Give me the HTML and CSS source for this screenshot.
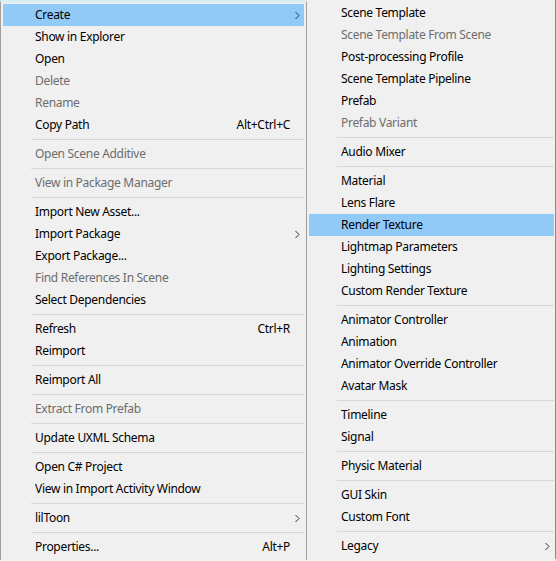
FILE: index.html
```html
<!DOCTYPE html>
<html lang="en">
<head>
    <meta charset="UTF-8">
    <title>Assets - Context Menu</title>
    <link rel="stylesheet" href="styles.css">
</head>
<body>
    <div class="menus">
        <div class="menu main">
            <div class="item active"><span>Create</span><span class="arrow"><svg width="5" height="9" viewBox="0 0 5 9"><polyline points="0.5,1 4,4.5 0.5,8"/></svg></span></div>
            <div class="item"><span>Show in Explorer</span></div>
            <div class="item"><span>Open</span></div>
            <div class="item disabled"><span>Delete</span></div>
            <div class="item disabled"><span>Rename</span></div>
            <div class="item"><span>Copy Path</span><span class="shortcut">Alt+Ctrl+C</span></div>
            <div class="sep"></div>
            <div class="item disabled"><span>Open Scene Additive</span></div>
            <div class="sep"></div>
            <div class="item disabled"><span>View in Package Manager</span></div>
            <div class="sep"></div>
            <div class="item"><span>Import New Asset...</span></div>
            <div class="item"><span>Import Package</span><span class="arrow"><svg width="5" height="9" viewBox="0 0 5 9"><polyline points="0.5,1 4,4.5 0.5,8"/></svg></span></div>
            <div class="item"><span>Export Package...</span></div>
            <div class="item disabled"><span>Find References In Scene</span></div>
            <div class="item"><span>Select Dependencies</span></div>
            <div class="sep"></div>
            <div class="item"><span>Refresh</span><span class="shortcut">Ctrl+R</span></div>
            <div class="item"><span>Reimport</span></div>
            <div class="sep"></div>
            <div class="item"><span>Reimport All</span></div>
            <div class="sep"></div>
            <div class="item disabled"><span>Extract From Prefab</span></div>
            <div class="sep"></div>
            <div class="item"><span>Update UXML Schema</span></div>
            <div class="sep"></div>
            <div class="item"><span>Open C# Project</span></div>
            <div class="item"><span>View in Import Activity Window</span></div>
            <div class="sep"></div>
            <div class="item"><span>lilToon</span><span class="arrow"><svg width="5" height="9" viewBox="0 0 5 9"><polyline points="0.5,1 4,4.5 0.5,8"/></svg></span></div>
            <div class="sep"></div>
            <div class="item"><span>Properties...</span><span class="shortcut">Alt+P</span></div>
        </div>

        <div class="menu sub">
            <div class="item"><span>Scene Template</span></div>
            <div class="item disabled"><span>Scene Template From Scene</span></div>
            <div class="item"><span>Post-processing Profile</span></div>
            <div class="item"><span>Scene Template Pipeline</span></div>
            <div class="item"><span>Prefab</span></div>
            <div class="item disabled"><span>Prefab Variant</span></div>
            <div class="sep"></div>
            <div class="item"><span>Audio Mixer</span></div>
            <div class="sep"></div>
            <div class="item"><span>Material</span></div>
            <div class="item"><span>Lens Flare</span></div>
            <div class="item active"><span>Render Texture</span></div>
            <div class="item"><span>Lightmap Parameters</span></div>
            <div class="item"><span>Lighting Settings</span></div>
            <div class="item"><span>Custom Render Texture</span></div>
            <div class="sep"></div>
            <div class="item"><span>Animator Controller</span></div>
            <div class="item"><span>Animation</span></div>
            <div class="item"><span>Animator Override Controller</span></div>
            <div class="item"><span>Avatar Mask</span></div>
            <div class="sep"></div>
            <div class="item"><span>Timeline</span></div>
            <div class="item"><span>Signal</span></div>
            <div class="sep"></div>
            <div class="item"><span>Physic Material</span></div>
            <div class="sep"></div>
            <div class="item"><span>GUI Skin</span></div>
            <div class="item"><span>Custom Font</span></div>
            <div class="sep"></div>
            <div class="item"><span>Legacy</span><span class="arrow"><svg width="5" height="9" viewBox="0 0 5 9"><polyline points="0.5,1 4,4.5 0.5,8"/></svg></span></div>
        </div>
    </div>
</body>
</html>
```

FILE: styles.css
```css
:root {
    --menu-bg: #f0f0f0;
    --hover: #91c9f7;
    --text: #000000;
    --text-disabled: #6d6d6d;
    --separator: #d7d7d7;
    --border: #a0a0a0;
}

* {
    box-sizing: border-box;
}

body {
    margin: 0;
    background: var(--menu-bg);
    font-family: "Segoe UI", "Noto Sans", sans-serif;
    font-size: 12px;
    letter-spacing: -0.3px;
    color: var(--text);
    overflow: hidden;
}

.menus {
    display: flex;
    align-items: flex-start;
}

.menu {
    background: var(--menu-bg);
    display: flex;
    flex-direction: column;
}

.menu.main {
    width: 307px;
    border-left: 1px solid var(--border);
    border-right: 1px solid var(--border);
    border-top: 3px solid #dcedf4;
    padding: 1px 2px 2px;
}

.menu.sub {
    width: 249px;
    border-right: 1px solid #8a8a8a;
    padding: 2px 1px 2px 2px;
}

.item {
    display: grid;
    grid-template-columns: 1fr auto 14px;
    align-items: center;
    height: 22px;
    padding-left: 32px;
    padding-bottom: 1px;
    white-space: nowrap;
}

.item.active {
    background: var(--hover);
}

.item.disabled {
    color: var(--text-disabled);
}

.shortcut {
    grid-column: 2;
}

.arrow {
    grid-column: 3;
    display: flex;
    align-items: center;
    padding-left: 5px;
    padding-top: 1px;
}

.arrow svg {
    display: block;
    fill: none;
    stroke: #333;
    stroke-width: 1;
}

.sep {
    height: 1px;
    margin: 3px 0 3px 28px;
    background: var(--separator);
}
```
